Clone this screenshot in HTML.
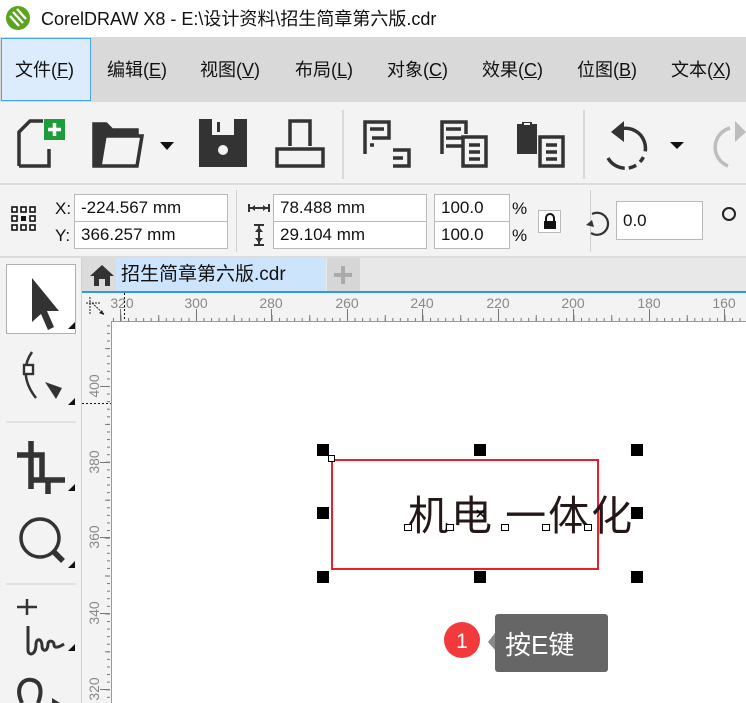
<!DOCTYPE html>
<html><head><meta charset="utf-8"><style>
*{margin:0;padding:0;box-sizing:border-box}
body{width:746px;height:703px;overflow:hidden;background:#f3f3f3;font-family:"Liberation Sans","Noto Sans CJK SC",sans-serif;position:relative;color:#111}
.a{position:absolute}
.menu span{position:absolute;top:58px;font-size:18px;line-height:24px;color:#111}
.inp{position:absolute;background:#fff;border:1px solid #b9b9b9;font-size:17px;line-height:25px;padding-left:6px;color:#111}
</style></head><body>
<!-- title -->
<div class="a" style="left:0;top:0;width:746px;height:37px;background:#fff"></div>
<svg class="a" style="left:5px;top:5px" width="26" height="26" viewBox="0 0 26 26"><circle cx="13" cy="13" r="12" fill="#5aa51e"/><path d="M5 11 L14 21 M8 7 L18 18 M12 4 L21 14" stroke="#fff" stroke-width="2.4"/></svg>
<div class="a" style="left:41px;top:7px;font-size:18px;line-height:24px;color:#111">CorelDRAW X8 - E:\设计资料\招生简章第六版.cdr</div>
<!-- menu -->
<div class="a" style="left:0;top:37px;width:746px;height:65px;background:#d9d9d9"></div>
<div class="a" style="left:1px;top:38px;width:90px;height:63px;background:#dcecfc;border:1px solid #46a6ea"></div>
<div class="menu">
<span style="left:15px">文件(<u>F</u>)</span>
<span style="left:107px">编辑(<u>E</u>)</span>
<span style="left:200px">视图(<u>V</u>)</span>
<span style="left:295px">布局(<u>L</u>)</span>
<span style="left:387px">对象(<u>C</u>)</span>
<span style="left:482px">效果(<u>C</u>)</span>
<span style="left:577px">位图(<u>B</u>)</span>
<span style="left:671px">文本(<u>X</u>)</span>
</div>
<!-- toolbar -->
<div class="a" style="left:0;top:183px;width:746px;height:2px;background:#dcdcdc"></div>
<svg class="a" style="left:0;top:102px" width="746" height="82">
<g fill="none" stroke="#333" stroke-width="3.5">
<path d="M19 64 V30 L30 19 H43 M49 47 V64 H19"/>
</g>
<rect x="44" y="17" width="21" height="21" fill="#1d9c3a"/>
<path d="M54.5 21 V34 M48 27.5 H61" stroke="#fff" stroke-width="3.5"/>
<path d="M94 64 V22 H106 L112 28 H137 V34 H105 L100 64 Z M105 34 H142 L137 64 H100" fill="none" stroke="#333" stroke-width="3.5" stroke-linejoin="miter"/>
<path d="M94 64 V22 H106 L112 28 H137 V34 H105 L100 64 Z" fill="#333"/>
<path d="M160 40 H174 L167 48 Z" fill="#111"/>
<path d="M199 17 H247 V65 H199 Z" fill="#333"/>
<rect x="212" y="17" width="22" height="16" fill="#f3f3f3"/><rect x="217" y="20" width="3" height="10" fill="#333"/>
<circle cx="223" cy="48" r="5" fill="#f3f3f3"/>
<path d="M290 44 V19 H310 V44 M277 64 V47 H323 V64 Z" fill="none" stroke="#333" stroke-width="3.5"/>
<line x1="343" y1="8" x2="343" y2="77" stroke="#d0d0d0" stroke-width="1.5"/>
<g fill="none" stroke="#333" stroke-width="3.5">
<path d="M365 52 V20 H389 V36 H372"/><path d="M370 27 H384 M370 43 H374"/>
<path d="M393 48 H409 V64 H393 M393 56 H403"/>
<path d="M442 52 V20 H466 V32 M446 27 H461 M446 36 H463 M446 44 H463"/>
<path d="M463 35 H486 V64 H463 Z M469 43 H480 M469 50 H480 M469 57 H480"/>
<path d="M540 35 H563 V64 H540 Z M546 43 H557 M546 50 H557 M546 57 H557"/>
</g>
<path d="M517 22 H537 V52 H517 Z" fill="#333"/><rect x="522" y="20" width="10" height="4" fill="#333"/><rect x="524" y="21" width="6" height="2" fill="#f3f3f3"/>
<line x1="584" y1="8" x2="584" y2="77" stroke="#d0d0d0" stroke-width="1.5"/>
<path d="M620 27 A20 20 0 1 1 608 56" fill="none" stroke="#333" stroke-width="3.5" stroke-dasharray="40 6 6 5 8 4"/>
<path d="M611 30 L624 19 V40 Z" fill="#333"/>
<path d="M670 40 H684 L677 47 Z" fill="#111"/>
<path d="M728 64 A20 20 0 0 1 730 26" fill="none" stroke="#bdbdbd" stroke-width="3.5"/>
<path d="M735 19 L746 30 L735 40 Z" fill="#bdbdbd"/>
</svg>
<!-- property bar -->
<div class="a" style="left:0;top:256px;width:746px;height:2px;background:#dcdcdc"></div>
<svg class="a" style="left:10px;top:205px" width="32" height="32"><g fill="#fff" stroke="#111" stroke-width="1.6"><rect x="2" y="2" width="5" height="5"/><rect x="11" y="2" width="5" height="5"/><rect x="20" y="2" width="5" height="5"/><rect x="2" y="11" width="5" height="5"/><rect x="20" y="11" width="5" height="5"/><rect x="2" y="20" width="5" height="5"/><rect x="11" y="20" width="5" height="5"/><rect x="20" y="20" width="5" height="5"/></g><rect x="11" y="11" width="5" height="5" fill="#111"/></svg>
<div class="a" style="left:55px;top:197px;font-size:17px;line-height:24px">X:</div>
<div class="a" style="left:55px;top:224px;font-size:17px;line-height:24px">Y:</div>
<div class="inp" style="left:74px;top:194px;width:154px;height:28px">-224.567 mm</div>
<div class="inp" style="left:74px;top:221px;width:154px;height:28px">366.257 mm</div>
<div class="a" style="left:236px;top:190px;width:1px;height:62px;background:#d0d0d0"></div>
<svg class="a" style="left:247px;top:200px" width="24" height="50"><path d="M2 8 H22 M2 4 V12 M22 4 V12" stroke="#333" stroke-width="2"/><path d="M4 8 L8 5 V11 Z M20 8 L16 5 V11Z" fill="#333"/><path d="M12 26 V44 M7 25 H17 M7 45 H17" stroke="#333" stroke-width="2"/><path d="M12 27 L8 32 H16Z M12 43 L8 38 H16Z" fill="#333"/></svg>
<div class="inp" style="left:273px;top:194px;width:154px;height:28px">78.488 mm</div>
<div class="inp" style="left:273px;top:221px;width:154px;height:28px">29.104 mm</div>
<div class="inp" style="left:434px;top:194px;width:76px;height:28px">100.0</div>
<div class="inp" style="left:434px;top:221px;width:76px;height:28px">100.0</div>
<div class="a" style="left:512px;top:197px;font-size:17px;line-height:24px">%</div>
<div class="a" style="left:512px;top:224px;font-size:17px;line-height:24px">%</div>
<div class="a" style="left:538px;top:210px;width:23px;height:23px;border:1px solid #b9b9b9;background:#fff"></div>
<svg class="a" style="left:541px;top:212px" width="18" height="18"><path d="M5 9 V6 A4 4 0 0 1 13 6 V9" fill="none" stroke="#111" stroke-width="2"/><rect x="3" y="9" width="12" height="8" fill="#111"/></svg>
<div class="a" style="left:590px;top:190px;width:1px;height:62px;background:#d0d0d0"></div>
<svg class="a" style="left:582px;top:206px" width="32" height="32"><path d="M10 8 A11 11 0 1 1 9 27" fill="none" stroke="#333" stroke-width="2.2"/><path d="M4 19 L10 14 L12 21 Z" fill="#333"/></svg>
<div class="inp" style="left:616px;top:201px;width:87px;height:39px;line-height:38px">0.0</div>
<div class="a" style="left:722px;top:207px;width:14px;height:14px;border:2px solid #222;border-radius:50%"></div>
<!-- left toolbox -->
<div class="a" style="left:81px;top:258px;width:1px;height:445px;background:#d0d0d0"></div>
<div class="a" style="left:6px;top:264px;width:70px;height:70px;background:#fff;border:1px solid #b0b0b0"></div>
<svg class="a" style="left:0;top:258px" width="81" height="445">
<path d="M32 20 L32 64 L41 56 L48 72 L54 69 L47 53 L59 53 Z" fill="#333"/>
<path d="M32 94 C22 108 24 125 36 140" fill="none" stroke="#333" stroke-width="2.5"/>
<rect x="24" y="107" width="9" height="9" fill="#fff" stroke="#333" stroke-width="2.4"/>
<path d="M45 124 L56 141 L62 130 Z" fill="#333"/>
<line x1="6" y1="164" x2="76" y2="164" stroke="#d0d0d0"/>
<path d="M31 183 V231 M17 197 H42 V222 H65 M41 222 H31 M48 222 V236" fill="none" stroke="#333" stroke-width="5.5"/>
<circle cx="40" cy="280" r="19" fill="none" stroke="#333" stroke-width="3.5"/>
<path d="M53 293 L63 303" stroke="#333" stroke-width="5.5"/>
<line x1="6" y1="326" x2="76" y2="326" stroke="#d0d0d0"/>
<path d="M27 341 V357 M17 349 H37" stroke="#333" stroke-width="2.5"/>
<path d="M28 368 V392 C28 398 36 398 36 386 C36 380 42 380 42 388 C42 394 48 394 48 386 C48 382 54 382 54 387 C54 390 58 390 64 386" fill="none" stroke="#333" stroke-width="3"/>
<path d="M22 445 C15 430 22 420 32 422 C42 424 42 435 38 445" fill="none" stroke="#333" stroke-width="4"/>
<path d="M52 440 L60 445 L52 445Z" fill="#333"/>
<g fill="#111"><path d="M75 64 L75 71 L68 71Z"/><path d="M75 140 L75 147 L68 147Z"/><path d="M75 226 L75 233 L68 233Z"/><path d="M75 303 L75 310 L68 310Z"/><path d="M75 386 L75 393 L68 393Z"/></g>
</svg>
<!-- tab row -->
<div class="a" style="left:82px;top:258px;width:664px;height:34px;background:#e8e8e8"></div>
<div class="a" style="left:82px;top:258px;width:34px;height:34px;background:#dcdcdc"></div>
<svg class="a" style="left:89px;top:263px" width="26" height="24"><path d="M13 2 L25 13 H21 V23 H5 V13 H1 Z" fill="#333"/><rect x="10" y="16" width="6" height="7" fill="#dcdcdc"/></svg>
<div class="a" style="left:116px;top:258px;width:210px;height:34px;background:#cce4fc"></div>
<div class="a" style="left:121px;top:262px;font-size:19px;line-height:26px;color:#111">招生简章第六版.cdr</div>
<div class="a" style="left:327px;top:258px;width:33px;height:34px;background:#d6d6d6"></div>
<svg class="a" style="left:332px;top:264px" width="22" height="22"><path d="M11 2 V20 M2 11 H20" stroke="#aaa" stroke-width="4"/></svg>
<div class="a" style="left:82px;top:291px;width:664px;height:2px;background:#2a9ae8"></div>
<!-- rulers -->
<div class="a" style="left:82px;top:293px;width:664px;height:410px;background:#f3f3f3"></div>
<svg class="a" style="left:0;top:0" width="746" height="703">
<defs>
<pattern id="hp" patternUnits="userSpaceOnUse" x="196" y="0" width="7.55" height="703"><line x1="0.5" y1="318" x2="0.5" y2="321" stroke="#777"/></pattern>
<pattern id="hm" patternUnits="userSpaceOnUse" x="196" y="0" width="37.75" height="703"><line x1="0.5" y1="315" x2="0.5" y2="321" stroke="#777"/></pattern>
<pattern id="vp" patternUnits="userSpaceOnUse" x="0" y="386" width="746" height="7.58"><line x1="107" y1="0.5" x2="110" y2="0.5" stroke="#777"/></pattern>
<pattern id="vm" patternUnits="userSpaceOnUse" x="0" y="386" width="746" height="37.9"><line x1="105" y1="0.5" x2="110" y2="0.5" stroke="#777"/></pattern>
</defs>
<rect x="112" y="293" width="634" height="29" fill="url(#hp)"/>
<rect x="112" y="293" width="634" height="29" fill="url(#hm)"/>
<rect x="82" y="322" width="30" height="381" fill="url(#vp)"/>
<rect x="82" y="322" width="30" height="381" fill="url(#vm)"/>
<g stroke="#777"><line x1="120.5" y1="309" x2="120.5" y2="321"/><line x1="196.5" y1="309" x2="196.5" y2="321"/><line x1="271.5" y1="309" x2="271.5" y2="321"/><line x1="347.5" y1="309" x2="347.5" y2="321"/><line x1="422.5" y1="309" x2="422.5" y2="321"/><line x1="498.5" y1="309" x2="498.5" y2="321"/><line x1="573.5" y1="309" x2="573.5" y2="321"/><line x1="649.5" y1="309" x2="649.5" y2="321"/><line x1="724.5" y1="309" x2="724.5" y2="321"/>
<line x1="100" y1="386.5" x2="110" y2="386.5"/><line x1="100" y1="462.5" x2="110" y2="462.5"/><line x1="100" y1="537.5" x2="110" y2="537.5"/><line x1="100" y1="613.5" x2="110" y2="613.5"/><line x1="100" y1="689.5" x2="110" y2="689.5"/></g>
<g font-family="Liberation Sans,sans-serif" font-size="14" fill="#888" text-anchor="middle">
<text x="122" y="308">320</text><text x="196" y="308">300</text><text x="271" y="308">280</text><text x="347" y="308">260</text><text x="422" y="308">240</text><text x="498" y="308">220</text><text x="573" y="308">200</text><text x="649" y="308">180</text><text x="724" y="308">160</text>
<text transform="translate(99,386) rotate(-90)" x="0" y="0">400</text>
<text transform="translate(99,462) rotate(-90)">380</text>
<text transform="translate(99,537) rotate(-90)">360</text>
<text transform="translate(99,613) rotate(-90)">340</text>
<text transform="translate(99,689) rotate(-90)">320</text>
</g>
<line x1="124.5" y1="293" x2="124.5" y2="321" stroke="#111" stroke-dasharray="2 2"/>
<line x1="82" y1="403.5" x2="111" y2="403.5" stroke="#111" stroke-dasharray="2 2"/>
<path d="M90 297 V314 M86 303 H100 M92 303 L104 314" stroke="#222" stroke-width="1" stroke-dasharray="2 1" fill="none"/>
<path d="M104 315 L99 313 L102 310Z" fill="#222"/>
<!-- canvas -->
<rect x="111.5" y="321.5" width="640" height="390" fill="#fff" stroke="#999"/>
<rect x="332" y="460" width="266" height="109" fill="none" stroke="#e8202e" stroke-width="2"/>
<text x="408" y="530" font-family="Noto Sans CJK SC,sans-serif" font-size="41" letter-spacing="2" fill="#231815">机电 一体化</text>
<g fill="#000"><rect x="317" y="444" width="12" height="12"/><rect x="474" y="444" width="12" height="12"/><rect x="631" y="444" width="12" height="12"/><rect x="317" y="507" width="12" height="12"/><rect x="631" y="507" width="12" height="12"/><rect x="317" y="571" width="12" height="12"/><rect x="474" y="571" width="12" height="12"/><rect x="631" y="571" width="12" height="12"/></g>
<g fill="#fff" stroke="#000" stroke-width="1"><rect x="328.5" y="455.5" width="6" height="6"/><rect x="404.5" y="524.5" width="7" height="6"/><rect x="446.5" y="524.5" width="7" height="6"/><rect x="501.5" y="524.5" width="7" height="6"/><rect x="542.5" y="524.5" width="7" height="6"/><rect x="584.5" y="524.5" width="7" height="6"/></g>
<path d="M477 510 L484 517 M484 510 L477 517" stroke="#000" stroke-width="1.5"/>
<!-- tooltip -->
<circle cx="462" cy="640" r="18" fill="#f23a3c"/>
<text x="462" y="648" font-family="Liberation Sans,sans-serif" font-size="21" fill="#fff" text-anchor="middle">1</text>
<rect x="495" y="614" width="113" height="58" rx="3" fill="#666"/>
<path d="M495 633 L488 642 L495 650Z" fill="#888"/>
<text x="505" y="654" font-family="Liberation Sans,Noto Sans CJK SC,sans-serif" font-size="26" fill="#fff">按E键</text>
</svg>
</body></html>
